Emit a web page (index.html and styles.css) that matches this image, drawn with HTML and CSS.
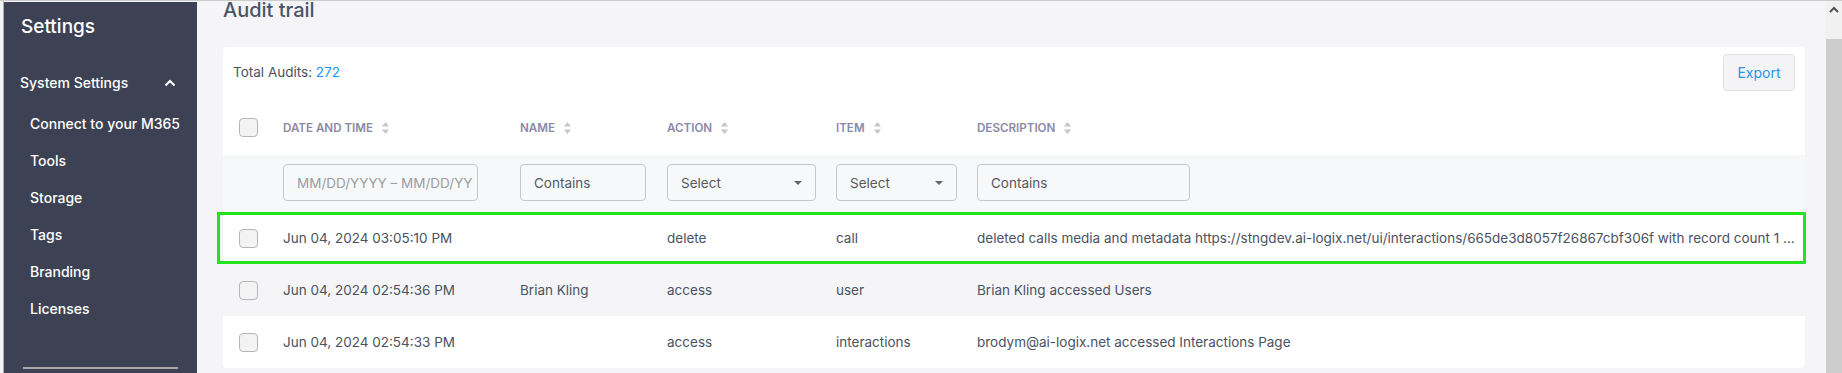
FILE: index.html
```html
<!DOCTYPE html>
<html lang="en">
<head>
  <meta charset="UTF-8">
  <title>Audit trail</title>
  <link rel="stylesheet" href="styles.css">
</head>
<body>
  <div class="app">
    <div class="gutter"></div>

    <!-- left settings menu -->
    <aside class="sidebar">
      <div class="side-title">Settings</div>
      <div class="side-group">
        <span>System Settings</span>
        <svg class="chev" width="12" height="8" viewBox="0 0 12 8"><path d="M1.5 6.5 L6 2 L10.5 6.5" fill="none" stroke="#fff" stroke-width="2"/></svg>
      </div>
      <nav class="side-menu">
        <a>Connect to your M365</a>
        <a>Tools</a>
        <a>Storage</a>
        <a>Tags</a>
        <a>Branding</a>
        <a>Licenses</a>
      </nav>
      <div class="side-rule"></div>
    </aside>

    <main class="content">
      <h1 class="page-title">Audit trail</h1>
      <section class="card">
        <div class="card-top">
          <div class="total">Total Audits: <span class="count">272</span></div>
          <button class="btn-export">Export</button>
        </div>

        <div class="grid head">
          <div class="cell"><span class="check"></span></div>
          <div class="cell th">Date and time <svg class="sort" width="7" height="12" viewBox="0 0 7 12"><path d="M3.5 0 L7 4.5 L0 4.5 Z M0 7.5 L7 7.5 L3.5 12 Z" fill="#c5c5cc"/></svg></div>
          <div class="cell th">Name <svg class="sort" width="7" height="12" viewBox="0 0 7 12"><path d="M3.5 0 L7 4.5 L0 4.5 Z M0 7.5 L7 7.5 L3.5 12 Z" fill="#c5c5cc"/></svg></div>
          <div class="cell th">Action <svg class="sort" width="7" height="12" viewBox="0 0 7 12"><path d="M3.5 0 L7 4.5 L0 4.5 Z M0 7.5 L7 7.5 L3.5 12 Z" fill="#c5c5cc"/></svg></div>
          <div class="cell th">Item <svg class="sort" width="7" height="12" viewBox="0 0 7 12"><path d="M3.5 0 L7 4.5 L0 4.5 Z M0 7.5 L7 7.5 L3.5 12 Z" fill="#c5c5cc"/></svg></div>
          <div class="cell th">Description <svg class="sort" width="7" height="12" viewBox="0 0 7 12"><path d="M3.5 0 L7 4.5 L0 4.5 Z M0 7.5 L7 7.5 L3.5 12 Z" fill="#c5c5cc"/></svg></div>
        </div>

        <div class="grid filters">
          <div class="cell"></div>
          <div class="cell"><div class="field w-date placeholder">MM/DD/YYYY – MM/DD/YY</div></div>
          <div class="cell"><div class="field w-name">Contains</div></div>
          <div class="cell"><div class="field select w-action">Select <i class="caret"></i></div></div>
          <div class="cell"><div class="field select w-item">Select <i class="caret"></i></div></div>
          <div class="cell"><div class="field w-desc">Contains</div></div>
        </div>

        <div class="grid row highlight">
          <div class="cell"><span class="check"></span></div>
          <div class="cell">Jun 04, 2024 03:05:10 PM</div>
          <div class="cell"></div>
          <div class="cell">delete</div>
          <div class="cell">call</div>
          <div class="cell">deleted calls media and metadata https://stngdev.ai-logix.net/ui/interactions/665de3d8057f26867cbf306f with record count 1 ...</div>
        </div>
        <div class="grid row alt">
          <div class="cell"><span class="check"></span></div>
          <div class="cell">Jun 04, 2024 02:54:36 PM</div>
          <div class="cell">Brian Kling</div>
          <div class="cell">access</div>
          <div class="cell">user</div>
          <div class="cell">Brian Kling accessed Users</div>
        </div>
        <div class="grid row">
          <div class="cell"><span class="check"></span></div>
          <div class="cell">Jun 04, 2024 02:54:33 PM</div>
          <div class="cell"></div>
          <div class="cell">access</div>
          <div class="cell">interactions</div>
          <div class="cell">brodym@ai-logix.net accessed Interactions Page</div>
        </div>
      </section>
    </main>

    <div class="scrollbar">
      <div class="sb-btn"><svg width="10" height="7" viewBox="0 0 10 7"><path d="M1 6 L5 2 L9 6" fill="none" stroke="#505050" stroke-width="2"/></svg></div>
      <div class="sb-thumb"></div>
    </div>
  </div>
</body>
</html>
```

FILE: styles.css
```css
/* base */
html, body { margin: 0; padding: 0; }
body { font-family: Inter, "Noto Sans", sans-serif; background: #f5f5f7; color: #4a5263; height: 373px; overflow: hidden; }
.app { display: flex; height: 372px; border-top: 1px solid #cbcbcb; }

/* left edge + sidebar */
.gutter { width: 3px; background: #f2f2f2; border-right: 1px solid #aeaeae; }
.sidebar { width: 193px; margin-top: 1px; background: #3c4254; color: #fff; display: flex; flex-direction: column; padding: 13px 0 4px; box-sizing: border-box; }
.side-title { font-size: 19px; line-height: 24px; font-weight: 500; padding-left: 17px; }
.side-group { display: flex; align-items: center; justify-content: space-between; height: 37px; margin-top: 25px; padding: 0 21px 0 16px; font-size: 14px; font-weight: 500; }
.chev { display: block; }
.side-menu { display: flex; flex-direction: column; padding-top: 4px; }
.side-menu a { display: block; line-height: 37px; padding-left: 26px; font-size: 14px; font-weight: 500; }
.side-rule { margin: auto 0 0 19px; width: 155px; height: 2px; background: #a9a9ab; }

/* main area */
.content { flex: 1; padding: 0 21px 0 26px; min-width: 0; }
.page-title { margin: -3px 0 0; font-size: 20px; line-height: 24px; font-weight: 500; color: #4a5465; }
.card { margin-top: 25px; background: #fff; border-radius: 4px; }
.card-top { display: flex; justify-content: space-between; align-items: flex-start; height: 53px; padding: 7px 10px 0; box-sizing: border-box; }
.total { line-height: 37px; font-size: 13.5px; }
.count { color: #2196f3; }
.btn-export { height: 37px; width: 72px; padding: 0; background: #f4f4f6; border: 1px solid #e2e2e4; border-radius: 4px; color: #2196f3; font: 14px Inter, "Noto Sans", sans-serif; }

/* table grid */
.grid { display: grid; grid-template-columns: 60px 237px 147px 169px 141px 1fr; }
.cell { display: flex; align-items: center; min-width: 0; white-space: nowrap; }
.cell:first-child { padding-left: 16px; }
.head { height: 55px; }
.th { font-size: 11.6px; font-weight: 600; text-transform: uppercase; color: #8b89a8; }
.sort { margin-left: 9px; }
.check { width: 17px; height: 17px; border: 1px solid #b6b6b8; border-radius: 4px; background: #f3f3f4; }

.filters { height: 57px; background: #f6f8f9; align-items: start; padding-top: 9px; box-sizing: border-box; }
.field { height: 37px; box-sizing: border-box; border: 1px solid #c5c8cb; border-radius: 4px; padding: 0 13px; display: flex; align-items: center; font-size: 13.5px; color: #555a60; }
.placeholder { color: #9a9ea3; }
.select { justify-content: space-between; }
.caret { width: 0; height: 0; border-left: 4px solid transparent; border-right: 4px solid transparent; border-top: 4px solid #666; }
.w-date { width: 195px; }
.w-name { width: 126px; }
.w-action { width: 149px; }
.w-item { width: 121px; }
.w-desc { width: 213px; }

.row { height: 52px; font-size: 13.5px; color: #4a5263; }
.alt { background: #f5f5f7; }
.highlight { position: relative; }
.highlight::after { content: ""; position: absolute; left: -6px; right: -1px; top: 0; bottom: 0; border: 3px solid #22e31c; }

/* fake scrollbar */
.scrollbar { width: 16px; display: flex; flex-direction: column; }
.sb-btn { height: 38px; background: #f1f1f1; display: flex; justify-content: center; padding-top: 5px; box-sizing: border-box; }
.sb-btn svg { display: block; }
.sb-thumb { flex: 1; background: #cdcdcd; }
```
